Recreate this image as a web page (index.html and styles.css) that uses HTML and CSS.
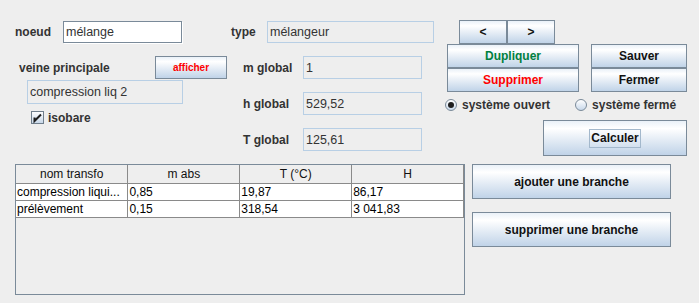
FILE: index.html
```html
<!DOCTYPE html>
<html>
<head>
    <meta charset="utf-8">
    <title>noeud mélange</title>
    <link rel="stylesheet" href="styles.css">
</head>
<body>
    <div class="frame">
        <div class="top">
            <!-- colonne gauche : noeud / veine -->
            <div class="col col-left">
                <div class="row row-noeud">
                    <span class="lbl lbl-noeud">noeud</span>
                    <div class="field editable field-noeud">mélange</div>
                </div>
                <div class="row row-veine">
                    <span class="lbl lbl-veine">veine principale</span>
                    <button class="btn btn-afficher">afficher</button>
                </div>
                <div class="field readonly field-veine">compression liq 2</div>
                <div class="check">
                    <svg class="check-box" width="13" height="13" viewBox="0 0 13 13">
                        <defs>
                            <linearGradient id="cbg" x1="0" y1="0" x2="0" y2="1">
                                <stop offset="0" stop-color="#ffffff"/>
                                <stop offset="1" stop-color="#c6d6e8"/>
                            </linearGradient>
                        </defs>
                        <rect x="0.5" y="0.5" width="12" height="12" fill="url(#cbg)" stroke="#6f7e8c"/>
                        <path d="M3.5 6.5 V10 L10 3.5" fill="none" stroke="#1e1e1e" stroke-width="2"/>
                    </svg>
                    <span class="lbl">isobare</span>
                </div>
            </div>

            <!-- colonne du milieu : type / globaux -->
            <div class="col col-mid">
                <div class="row row-type">
                    <span class="lbl lbl-type">type</span>
                    <div class="field readonly field-type">mélangeur</div>
                </div>
                <div class="row row-global">
                    <span class="lbl lbl-global">m global</span>
                    <div class="field readonly field-global">1</div>
                </div>
                <div class="row row-global">
                    <span class="lbl lbl-global">h global</span>
                    <div class="field readonly field-global">529,52</div>
                </div>
                <div class="row row-global">
                    <span class="lbl lbl-global">T global</span>
                    <div class="field readonly field-global">125,61</div>
                </div>
            </div>

            <!-- colonne droite : boutons -->
            <div class="col col-right">
                <div class="row nav">
                    <button class="btn btn-nav">&lt;</button>
                    <button class="btn btn-nav">&gt;</button>
                </div>
                <div class="row actions">
                    <div class="stack stack-left">
                        <button class="btn btn-action btn-dupliquer">Dupliquer</button>
                        <button class="btn btn-action btn-supprimer">Supprimer</button>
                    </div>
                    <div class="stack stack-right">
                        <button class="btn btn-action">Sauver</button>
                        <button class="btn btn-action">Fermer</button>
                    </div>
                </div>
                <div class="row radios">
                    <div class="radio radio-ouvert">
                        <span class="radio-dot selected"></span>
                        <span class="lbl">système ouvert</span>
                    </div>
                    <div class="radio radio-ferme">
                        <span class="radio-dot"></span>
                        <span class="lbl">système fermé</span>
                    </div>
                </div>
                <div class="row calc">
                    <button class="btn btn-calculer"><span class="focus">Calculer</span></button>
                </div>
            </div>
        </div>

        <div class="bottom">
            <div class="table-wrap">
                <table class="branches">
                    <thead>
                        <tr><th>nom transfo</th><th>m abs</th><th>T (°C)</th><th>H</th></tr>
                    </thead>
                    <tbody>
                        <tr><td>compression liqui...</td><td>0,85</td><td>19,87</td><td>86,17</td></tr>
                        <tr><td>prélèvement</td><td>0,15</td><td>318,54</td><td>3 041,83</td></tr>
                    </tbody>
                </table>
            </div>
            <div class="branch-btns">
                <button class="btn btn-branche">ajouter une branche</button>
                <button class="btn btn-branche">supprimer une branche</button>
            </div>
        </div>
    </div>
</body>
</html>
```

FILE: styles.css
```css
body, html {
    margin: 0;
    height: 100%;
    background-color: #eeeeee;
    font-family: "Liberation Sans", Arial, sans-serif;
    overflow: hidden;
}

.frame {
    width: 699px;
    height: 303px;
}

.top {
    display: flex;
    height: 164px;
}

.col {
    display: flex;
    flex-direction: column;
}

.row {
    display: flex;
    align-items: center;
}

.lbl {
    font-size: 12px;
    font-weight: bold;
    color: #333333;
    white-space: nowrap;
}

/* champs texte */
.field {
    box-sizing: border-box;
    font-size: 12.5px;
    color: #333333;
    padding-left: 2px;
    display: flex;
    align-items: center;
    white-space: nowrap;
}

.editable {
    background-color: #ffffff;
    border: 1px solid #7a8a99;
    box-shadow: 1px 1px 0 #ffffff;
}

.readonly {
    background-color: #eeeeee;
    border: 1px solid #b8cfe5;
}

/* boutons Metal */
.btn {
    box-sizing: border-box;
    font-family: "Liberation Sans", Arial, sans-serif;
    font-size: 12px;
    font-weight: bold;
    color: #111111;
    border: 1px solid #7a8a99;
    background: linear-gradient(to bottom, #eaf1f8 0%, #ffffff 22%, #e4ecf5 55%, #c0d3e8 100%);
    padding: 0;
    margin: 0;
    cursor: pointer;
}

/* colonne gauche */
.col-left {
    width: 212px;
    padding-left: 15px;
}

.row-noeud {
    margin-top: 21px;
    height: 22px;
}

.lbl-noeud {
    width: 48px;
}

.field-noeud {
    width: 119px;
    height: 22px;
}

.row-veine {
    margin-top: 13px;
    height: 23px;
}

.lbl-veine {
    padding-left: 4px;
    flex: 1;
}

.btn-afficher {
    width: 72px;
    height: 23px;
    color: #ff0000;
    font-size: 10px;
}

.field-veine {
    margin-top: 1px;
    margin-left: 12px;
    width: 156px;
    height: 24px;
}

.check {
    display: flex;
    align-items: center;
    margin-top: 7px;
    margin-left: 16px;
    height: 13px;
}

.check-box {
    margin-right: 4px;
}

/* colonne du milieu */
.col-mid {
    width: 203px;
    margin-left: 4px;
}

.row-type {
    margin-top: 21px;
    height: 22px;
}

.lbl-type {
    width: 36px;
}

.field-type {
    width: 167px;
    height: 22px;
}

.row-global {
    margin-top: 13px;
    margin-left: 12px;
    height: 23px;
}

.lbl-global {
    width: 60px;
}

.field-global {
    width: 119px;
    height: 23px;
}

/* colonne droite */
.col-right {
    width: 242px;
    margin-left: 11px;
}

.nav {
    margin-top: 20px;
    margin-left: 14px;
}

.btn-nav {
    width: 48px;
    height: 24px;
    font-size: 12px;
}

.actions {
    align-items: flex-start;
}

.stack {
    display: flex;
    flex-direction: column;
}

.stack-left {
    margin-left: 2px;
    width: 132px;
}

.stack-right {
    margin-left: 12px;
    width: 96px;
}

.btn-action {
    height: 24px;
    width: 100%;
}

.btn-dupliquer {
    color: #008040;
}

.btn-supprimer {
    color: #ff0000;
}

.radios {
    margin-top: 7px;
    height: 12px;
}

.radio {
    display: flex;
    align-items: center;
}

.radio-ferme {
    margin-left: 25px;
}

.radio-dot {
    box-sizing: border-box;
    width: 12px;
    height: 12px;
    border-radius: 50%;
    border: 1px solid #7a8a99;
    background: linear-gradient(to bottom, #ffffff 0%, #c8d8ea 100%);
    margin-right: 5px;
    position: relative;
}

.radio-dot.selected::after {
    content: "";
    position: absolute;
    left: 2px;
    top: 2px;
    width: 6px;
    height: 6px;
    border-radius: 50%;
    background-color: #1e1e1e;
}

.calc {
    margin-top: 9px;
    justify-content: flex-end;
    padding-right: 0;
}

.btn-calculer {
    width: 144px;
    height: 36px;
    margin-right: 0;
}

.focus {
    display: inline-block;
    border: 1px solid #a3b8cc;
    padding: 1px 1px;
    line-height: 15px;
}

/* bas : tableau et boutons de branche */
.bottom {
    display: flex;
    align-items: flex-start;
}

.table-wrap {
    box-sizing: border-box;
    margin-left: 15px;
    width: 450px;
    height: 131px;
    border: 1px solid #7a8a99;
    background-color: #eeeeee;
}

.branches {
    border-collapse: collapse;
    table-layout: fixed;
    width: 448px;
    font-size: 12px;
    color: #000000;
}

.branches th {
    font-weight: normal;
    height: 18px;
    padding: 0;
    background-color: #eeeeee;
    border-right: 1px solid #8a8a8a;
    border-bottom: 1px solid #8a8a8a;
    text-align: center;
    color: #111111;
}

.branches td {
    height: 16px;
    padding: 0 0 0 1px;
    background-color: #ffffff;
    border-right: 1px solid #8a8a8a;
    border-bottom: 1px solid #8a8a8a;
    white-space: nowrap;
    overflow: hidden;
}

.branch-btns {
    display: flex;
    flex-direction: column;
    gap: 13px;
    margin-left: 7px;
}

.btn-branche {
    width: 199px;
    height: 35px;
}
```
